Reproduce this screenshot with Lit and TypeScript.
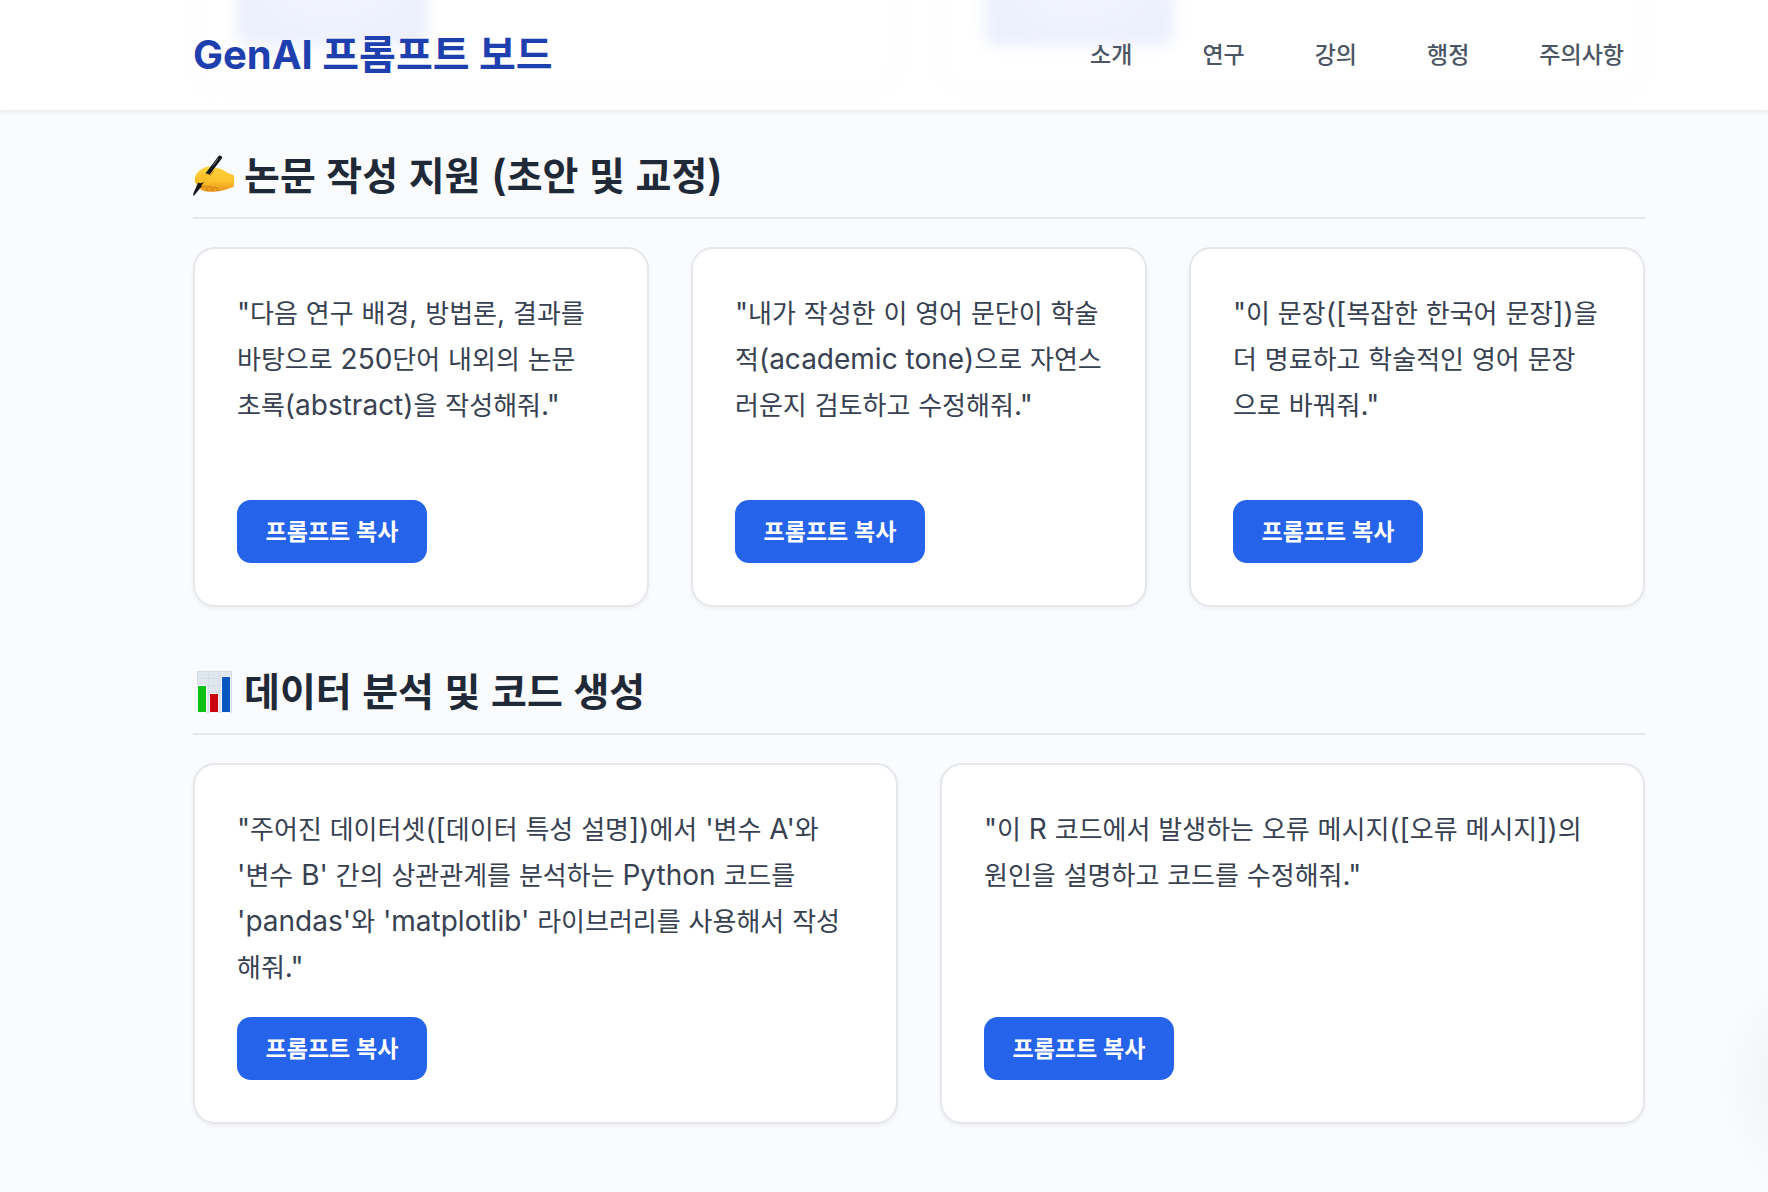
import { LitElement, html, css, svg } from "lit";
import { customElement, property } from "lit/decorators.js";

const writingHand = svg`
  <svg class="emoji" viewBox="0 0 42 42" aria-hidden="true">
    <defs>
      <linearGradient id="skin" x1="0" y1="0" x2="0" y2="1">
        <stop offset="0" stop-color="#ffd53e" />
        <stop offset="0.6" stop-color="#fbc02a" />
        <stop offset="1" stop-color="#e8921a" />
      </linearGradient>
    </defs>
    <path fill="url(#skin)" d="M2 27C1 21 4 17 8 14.500C11 12.500 15 10.500 18 12L26 13.500C30 14 32 16.500 35 18L40.500 20C41.500 23 41.500 28 40.500 32C36 33.500 32 35 27 36C22 37 14 37 11 36C7.500 35 5.500 32 4 30Z" />
    <path fill="none" stroke="#c97a12" stroke-width="1" stroke-linecap="round" d="M9 32C12 30.500 14 31 14.500 35M14.500 32C17 30.500 19.500 31.500 19.500 35M20 32.500C22.500 31.500 24.500 32.500 25 35.500M13 24C16 22.500 18 20 20 16.500" />
    <path fill="none" stroke="#15171a" stroke-width="4" stroke-linecap="round" d="M27 2.500L7 29" />
    <path fill="#15171a" d="M5 28L9 31L1.500 40L0 41L0.500 38Z" />
    <path fill="#fbc02a" d="M5 22C8 18 15 17.500 17 20.500C17.500 24 12 27 8.500 28C5 29 3 25 5 22Z" />
    <path fill="none" stroke="#6b717b" stroke-width="1" d="M25 3.500L20 10.500" />
  </svg>
`;

const barChart = svg`
  <svg class="emoji" viewBox="0 0 42 42" aria-hidden="true">
    <rect x="4" y="0" width="35" height="42" fill="#d3dbe4" />
    <rect x="5" y="1" width="33" height="40" fill="#dfe6ee" />
    <path stroke="#d5dde6" stroke-width="1" d="M5 7.500H38M5 14.500H38M5 21.500H38M5 28.500H38M5 35.500H38M15.500 1V41M26.500 1V41" />
    <rect x="4" y="14" width="10" height="28" fill="#f5fbf5" />
    <rect x="16" y="22" width="10" height="20" fill="#fbf3f3" />
    <rect x="28" y="5" width="10" height="37" fill="#f2f6fc" />
    <rect x="5" y="15" width="8" height="26" fill="#0fc013" />
    <rect x="17" y="23" width="8" height="18" fill="#c9060b" />
    <rect x="29" y="6" width="8" height="35" fill="#0758c0" />
  </svg>
`;

/* \u200b marks where a long Korean word may break onto the next line */
const sections = [
  {
    icon: writingHand,
    title: "논문 작성 지원 (초안 및 교정)",
    columns: 3,
    prompts: [
      "\"다음 연구 배경, 방법론, 결과를 바탕으로 250단어 내외의 논문 초록(abstract)을 작성해줘.\"",
      "\"내가 작성한 이 영어 문단이 학술\u200b적(academic tone)으로 자연스\u200b러운지 검토하고 수정해줘.\"",
      "\"이 문장([복잡한 한국어 문장])을 더 명료하고 학술적인 영어 문장\u200b으로 바꿔줘.\"",
    ],
  },
  {
    icon: barChart,
    title: "데이터 분석 및 코드 생성",
    columns: 2,
    prompts: [
      "\"주어진 데이터셋([데이터 특성 설명])에서 '변수 A'와 '변수 B' 간의 상관관계를 분석하는 Python 코드를 'pandas'와 'matplotlib' 라이브러리를 사용해서 작성\u200b해줘.\"",
      "\"이 R 코드에서 발생하는 오류 메시지([오류 메시지])의 원인을 설명하고 코드를 수정해줘.\"",
    ],
  },
];

const links = [
  ["#intro", "소개"],
  ["#research", "연구"],
  ["#teaching", "강의"],
  ["#admin", "행정"],
  ["#notice", "주의사항"],
];

/* Latin runs are set a step larger than Hangul so both scripts look even */
const mixScripts = (text: string) =>
  text
    .split(/(\u200b|[^가-힣\u200b]+)/)
    .filter((run) => run)
    .map((run) => {
      if (run === "\u200b") return html`<wbr />`;
      return /[가-힣]/.test(run) ? run : html`<span class="latin">${run}</span>`;
    });

@customElement("prompt-card")
class PromptCard extends LitElement {
  @property() text = "";

  static styles = css`
    :host {
      box-sizing: border-box;
      display: flex;
      flex-direction: column;
      align-items: flex-start;
      justify-content: space-between;
      gap: 26px;
      min-height: 360px;
      padding: 42px;
      border: 2px solid #e5e7eb;
      border-radius: 22px;
      background: #fff;
      box-shadow: 0 2px 4px rgba(0, 0, 0, 0.05);
    }
    .text {
      margin: 0;
      color: #374151;
      font-size: 26px;
      line-height: 46px;
      word-break: keep-all;
    }
    .latin {
      font-size: 28px;
      line-height: 1;
    }
    .copy {
      height: 63px;
      min-width: 190px;
      padding: 0 28px 4px;
      border: 0;
      border-radius: 14px;
      background: #2563eb;
      color: #fff;
      font: inherit;
      font-size: 23px;
      font-weight: 600;
      cursor: pointer;
    }
    .copy:hover {
      background: #1d4ed8;
    }
  `;

  private copy() {
    navigator.clipboard?.writeText(this.text.replaceAll("\u200b", ""));
  }

  render() {
    return html`
      <p class="text">${mixScripts(this.text)}</p>
      <button class="copy" type="button" @click=${this.copy}>프롬프트 복사</button>
    `;
  }
}

@customElement("app-root")
class AppRoot extends LitElement {
  static styles = css`
    :host {
      display: block;
      position: relative;
      overflow: hidden;
      min-height: 100vh;
      background: #fafbfd;
      font-family: Inter, "Noto Sans CJK KR", sans-serif;
    }
    .header {
      position: relative;
      overflow: hidden;
      box-sizing: border-box;
      height: 110px;
      padding: 0 123px 0 193px;
      background: #fff;
    }
    .shell {
      box-shadow: 0 2px 4px rgba(0, 0, 0, 0.07);
    }
    .bar {
      position: relative;
      display: flex;
      align-items: center;
      justify-content: space-between;
      height: 100%;
    }
    .under {
      position: absolute;
      inset: -56px 123px auto 193px;
      display: grid;
      grid-template-columns: 1fr 1fr;
      gap: 42px;
      filter: blur(7px);
    }
    .ghost {
      height: 102px;
      padding: 0 42px 44px;
      border: 2px solid #fbfbfc;
      border-top: 0;
      border-radius: 22px;
      display: flex;
      align-items: flex-end;
    }
    .ghost-button {
      width: 190px;
      height: 100%;
      border-radius: 14px;
      background: radial-gradient(ellipse at center, #f2f5fe, #ecf0fd 70%);
    }
    .brand {
      margin: 0;
      color: #1e40af;
      font-size: 40px;
      font-weight: 700;
      line-height: 50px;
    }
    .nav {
      display: flex;
      gap: 28px;
    }
    .link {
      padding: 0 21px;
      color: #4b5563;
      font-size: 23px;
      font-weight: 500;
      line-height: 34px;
      text-decoration: none;
    }
    .main {
      display: flex;
      flex-direction: column;
      gap: 60px;
      padding: 41px 123px 68px 193px;
    }
    .heading {
      display: flex;
      align-items: center;
      gap: 9px;
      margin: 0 0 28px;
      padding-bottom: 16px;
      border-bottom: 2px solid #e5e7eb;
      color: #1f2937;
      font-size: 39px;
      font-weight: 600;
      line-height: 50px;
    }
    .heading .latin {
      font-size: 42px;
      line-height: 1;
    }
    .emoji {
      flex: none;
      width: 42px;
      height: 42px;
    }
    .grid {
      display: grid;
      gap: 42px;
    }
    .cols-3 {
      grid-template-columns: repeat(3, minmax(0, 1fr));
    }
    .cols-2 {
      grid-template-columns: repeat(2, minmax(0, 1fr));
    }
    .glow {
      position: absolute;
      right: -110px;
      bottom: 0;
      width: 160px;
      height: 220px;
      background: radial-gradient(closest-side, #f1f2f4, #f5f6f8 50%, #fafbfd);
    }
  `;

  render() {
    return html`
      <div class="shell">
        <header class="header">
          <div class="under" aria-hidden="true">
            <div class="ghost"><div class="ghost-button"></div></div>
            <div class="ghost"><div class="ghost-button"></div></div>
          </div>
          <div class="bar">
            <h1 class="brand">GenAI 프롬프트 보드</h1>
            <nav class="nav">
              ${links.map(([href, label]) => html`<a class="link" href=${href}>${label}</a>`)}
            </nav>
          </div>
        </header>
      </div>
      <main class="main">
        ${sections.map(
          (s) => html`
            <section>
              <h2 class="heading">${s.icon}<span>${mixScripts(s.title)}</span></h2>
              <div class="grid cols-${s.columns}">
                ${s.prompts.map((p) => html`<prompt-card .text=${p}></prompt-card>`)}
              </div>
            </section>
          `
        )}
      </main>
      <div class="glow" aria-hidden="true"></div>
    `;
  }
}
